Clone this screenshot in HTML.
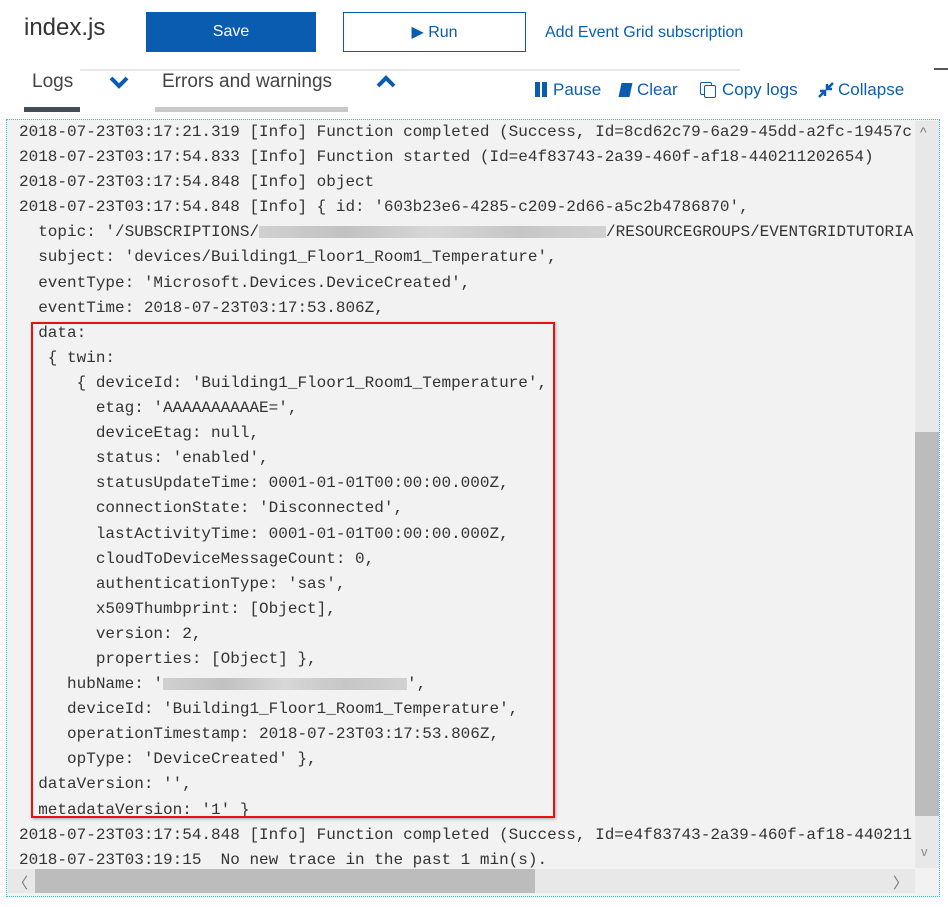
<!DOCTYPE html>
<html><head><style>
body{margin:0;width:948px;height:907px;background:#fff;position:relative;overflow:hidden;font-family:"Liberation Sans",sans-serif}
.a{position:absolute}
.btn{position:absolute;top:12px;height:40px;box-sizing:border-box;display:flex;align-items:center;justify-content:center;font-size:16px}
.blue{color:#0a5fb4}
pre{position:absolute;left:19px;top:119px;margin:0;font-family:"Liberation Mono",monospace;font-size:16px;line-height:25.1px;color:#333;white-space:pre}
.blur{display:inline-block;background:linear-gradient(90deg,#c8c8c8,#b5b5b5,#d0d0d0,#bbb,#c9c9c9);height:12px;vertical-align:middle;opacity:.8}
</style></head><body>
<div class="a" style="left:24px;top:14px;font-size:24px;color:#333">index.js</div>
<div class="btn" style="left:146px;width:170px;background:#0a5cb0;color:#fff">Save</div>
<div class="btn" style="left:343px;width:183px;border:1px solid #0a5cb0;color:#0a5cb0">▶ Run</div>
<div class="a blue" style="left:545px;top:24px;font-size:16px">Add Event Grid subscription</div>
<div class="a" style="left:80px;top:69px;width:660px;height:2px;background:#e8e8e8"></div>
<div class="a" style="left:32px;top:71px;font-size:19px;color:#444">Logs</div>
<div class="a" style="left:24px;top:107px;width:56px;height:5px;background:#444c55"></div>
<svg class="a" style="left:108px;top:74px" width="22" height="16"><path d="M3 4 L11 12 L19 4" stroke="#0a5cb0" stroke-width="4" fill="none"/></svg>
<div class="a" style="left:162px;top:71px;font-size:19px;color:#444">Errors and warnings</div>
<div class="a" style="left:155px;top:107px;width:193px;height:5px;background:#c8c8c8"></div>
<svg class="a" style="left:375px;top:74px" width="22" height="16"><path d="M3 12 L11 4 L19 12" stroke="#0a5cb0" stroke-width="4" fill="none"/></svg>
<div class="a" style="left:934px;top:68px;width:14px;height:2px;background:#555"></div>
<div class="a blue" style="left:535px;top:80px;font-size:17px"><span style="display:inline-block;width:5px;height:15px;background:#0a5cb0;margin-right:2px;vertical-align:-2px"></span><span style="display:inline-block;width:5px;height:15px;background:#0a5cb0;margin-right:6px;vertical-align:-2px"></span>Pause</div>
<div class="a blue" style="left:620px;top:80px;font-size:17px"><span style="display:inline-block;width:11px;height:14px;background:#0a5cb0;transform:skewX(-12deg);margin-right:6px;vertical-align:-2px"></span>Clear</div>
<div class="a blue" style="left:700px;top:80px;font-size:17px"><span style="display:inline-block;position:relative;width:18px;height:16px;vertical-align:-3px;margin-right:4px"><span style="position:absolute;left:0;top:0;width:10px;height:11px;border:1.5px solid #0a5cb0;border-radius:2px"></span><span style="position:absolute;left:4px;top:3px;width:10px;height:11px;border:1.5px solid #0a5cb0;background:#fff;border-radius:2px"></span></span>Copy logs</div>
<svg class="a" style="left:818px;top:82px" width="16" height="16"><path d="M15 1 L9 7 M9 2 V7 H14 M1 15 L7 9 M2 9 H7 V14" stroke="#0a5cb0" stroke-width="2.5" fill="none"/></svg>
<div class="a blue" style="left:838px;top:80px;font-size:17px">Collapse</div>
<div class="a" style="left:6px;top:119px;width:932px;height:776px;border:1px dotted #3bb8e0;background:#f2f2f2"></div>
<div class="a" style="left:915px;top:121px;width:24px;height:747px;background:#e8e8e8"></div>
<div class="a" style="left:915px;top:432px;width:24px;height:384px;background:#bcbcbc"></div>
<div class="a" style="left:920px;top:124px;font-size:14px;color:#777">^</div>
<div class="a" style="left:921px;top:844px;font-size:13px;color:#888">v</div>
<div class="a" style="left:8px;top:869px;width:907px;height:24px;background:#e8e8e8"></div>
<div class="a" style="left:35px;top:869px;width:500px;height:24px;background:#bcbcbc"></div>
<div class="a" style="left:13px;top:872px;font-size:15px;color:#777">〈</div>
<div class="a" style="left:893px;top:872px;font-size:15px;color:#777">〉</div>
<div class="a" style="left:8px;top:121px;width:906px;height:747px;overflow:hidden">
<pre style="left:11px;top:-1px">2018-07-23T03:17:21.319 [Info] Function completed (Success, Id=8cd62c79-6a29-45dd-a2fc-19457c
2018-07-23T03:17:54.833 [Info] Function started (Id=e4f83743-2a39-460f-af18-440211202654)
2018-07-23T03:17:54.848 [Info] object
2018-07-23T03:17:54.848 [Info] { id: '603b23e6-4285-c209-2d66-a5c2b4786870',
  topic: '/SUBSCRIPTIONS/<span class="blur" style="width:347px"></span>/RESOURCEGROUPS/EVENTGRIDTUTORIA
  subject: 'devices/Building1_Floor1_Room1_Temperature',
  eventType: 'Microsoft.Devices.DeviceCreated',
  eventTime: 2018-07-23T03:17:53.806Z,
  data:
   { twin:
      { deviceId: 'Building1_Floor1_Room1_Temperature',
        etag: 'AAAAAAAAAAE=',
        deviceEtag: null,
        status: 'enabled',
        statusUpdateTime: 0001-01-01T00:00:00.000Z,
        connectionState: 'Disconnected',
        lastActivityTime: 0001-01-01T00:00:00.000Z,
        cloudToDeviceMessageCount: 0,
        authenticationType: 'sas',
        x509Thumbprint: [Object],
        version: 2,
        properties: [Object] },
     hubName: '<span class="blur" style="width:244px"></span>',
     deviceId: 'Building1_Floor1_Room1_Temperature',
     operationTimestamp: 2018-07-23T03:17:53.806Z,
     opType: 'DeviceCreated' },
  dataVersion: '',
  metadataVersion: '1' }
2018-07-23T03:17:54.848 [Info] Function completed (Success, Id=e4f83743-2a39-460f-af18-440211
2018-07-23T03:19:15  No new trace in the past 1 min(s).</pre>
</div>
<div class="a" style="left:31px;top:322px;width:520px;height:492px;border:2px solid #e81010;box-shadow:1px 1px 3px rgba(0,0,0,.3)"></div>
</body></html>
